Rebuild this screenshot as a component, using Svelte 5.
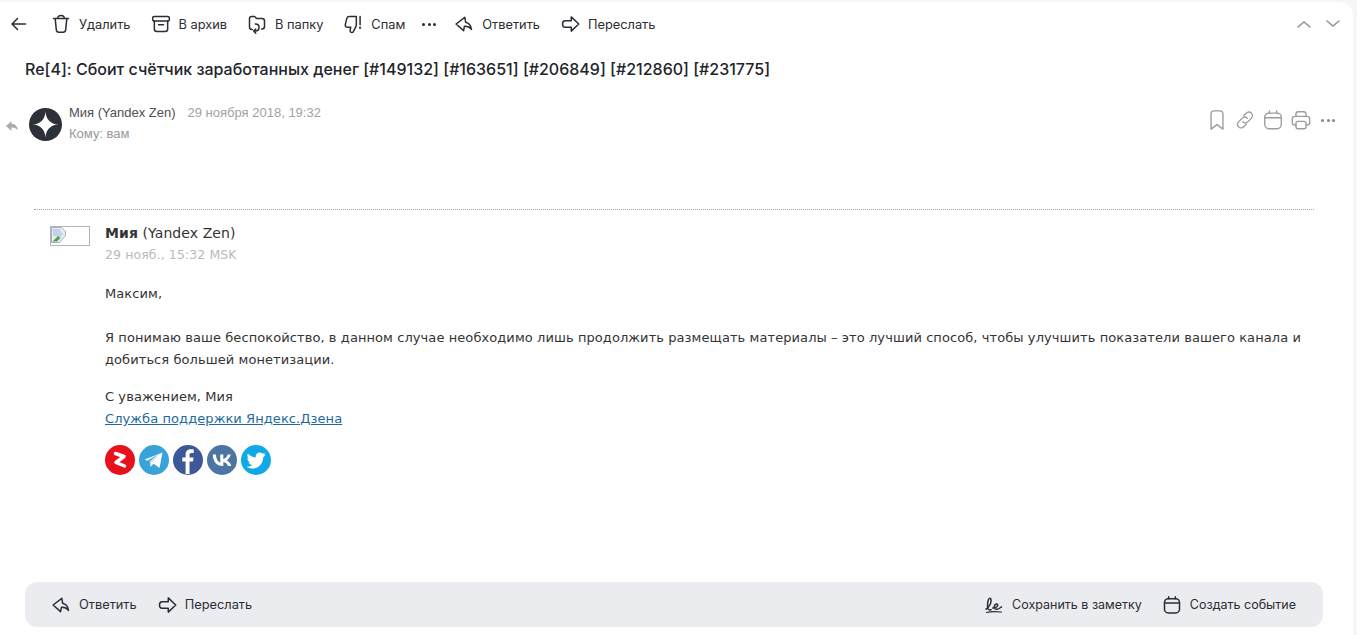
<script>
  const tools = [
    { label: 'Удалить', icon: 'trash' },
    { label: 'В архив', icon: 'archive' },
    { label: 'В папку', icon: 'folder' },
    { label: 'Спам', icon: 'spam' }
  ];
  const icons = {
    trash: '<path d="M3 5.5h18M8 5.5C8 3 9.5 1.8 12 1.8S16 3 16 5.5M5 5.5l1.4 13.500c.2 1.800 1.200 2.800 3 2.800h5.200c1.800 0 2.800-1 3-2.800L19 5.5"/>',
    archive: '<rect x="2" y="3" width="20" height="5.5" rx="1.8"/><path d="M4 8.5V18c0 2 1 3 3 3h10c2 0 3-1 3-3V8.5M9 13h6"/>',
    folder: '<path d="M6.5 18.5H6c-2 0-3-1-3-3V5.5C3 4 4 3 5.5 3H9l2.5 2.5H18c2 0 3 1.2 3 3V15c0 2-1 3-3 3h-.5"/><path d="M10 12c3 0 4.5 1.8 4.5 4s-1.5 4.500-4.500 4.500H8M10.500 18 8 20.500l2.500 2.500"/>',
    spam: '<path d="M16 3H7.5C6 3 5 3.8 4.600 5.200L2.800 12.500C2.400 14.500 3.500 16 5.500 16H9.300l-.7 3.300c-.3 1.700.7 3 2.100 3 .8 0 1.300-.4 1.700-1.100l3.600-7.200V3ZM20.500 3v10"/><circle cx="20.500" cy="16.500" r=".5"/>',
    reply: '<path d="M13 4 2.500 12l9 8 1-5.200c3.500-.2 6.500 1 8.500 3.700-.8-5-3-7.600-7-8.500L13 4Z"/>',
    forward: '<path d="M13.500 3.500 22.500 12l-9 8.500V16H6c-2 0-3-1.300-3-4s1-4 3-4h7.500V3.500Z"/>',
    calendar: '<rect x="3" y="4.500" width="18" height="17" rx="4.500"/><path d="M3 9.500h18M8 2v2.500M16 2v2.500"/>',
    note: '<path d="M2.500 17c3-2.500 6-6.500 6-10.500 0-2-1-3-2-2.500-2 1-2.800 8-1.800 12 .5 2 2 2.500 3.800 1.500M10.500 15.500c2 .5 6-1 6-3.500 0-1.800-2.200-1.800-3.500 0-1.700 2.500-.5 5.500 2.500 5.200 2-.2 3.500-1.500 5.500-3"/><path d="M3 21c5-1.200 12-1.200 18-.5" stroke-width="1.300"/>',
    bookmark: '<path d="M5.500 5.500C5.500 3.500 7 2 9 2h6c2 0 3.500 1.500 3.500 3.500V22L12 17l-6.500 5V5.500Z"/>',
    link: '<path d="M10.500 7.500 13 5c2-2 4.500-2 6-.5s1.500 4-.5 6l-3 3c-2 2-4.500 2-6 .5"/><path d="M13.500 16.500 11 19c-2 2-4.500 2-6 .5s-1.500-4 .5-6l3-3c2-2 4.500-2 6-.5"/>',
    printer: '<path d="M6.500 17.500H5c-1.500 0-2.500-1-2.500-2.500v-4c0-1.800 1.300-3 3-3h13c1.700 0 3 1.200 3 3v4c0 1.500-1 2.500-2.500 2.500h-1.500"/><path d="M6.500 8V5.500C6.500 4 7.500 3 9 3h6c1.500 0 2.500 1 2.500 2.500V8"/><rect x="6.500" y="13.500" width="11" height="8" rx="2.200"/>'
  };
</script>

{#snippet icon(name, size = 20)}
  <svg class="icon" width={size} height={size} viewBox="0 0 24 24" fill="none" stroke="currentColor" stroke-width="1.800" stroke-linecap="round" stroke-linejoin="round" aria-hidden="true">
    {@html icons[name]}
  </svg>
{/snippet}

<div class="page">
  <div class="card">
    <header class="toolbar">
      <svg class="back" width="18" height="18" viewBox="0 0 18 18" fill="none" stroke="currentColor" stroke-width="1.500" stroke-linecap="round" stroke-linejoin="round" aria-hidden="true"><path d="M15.500 9H2M7.500 3.500 2 9l5.500 5.500"/></svg>
      {#each tools as t}
        <button class="tool">{@render icon(t.icon)}<span>{t.label}</span></button>
      {/each}
      <span class="dots"><i></i><i></i><i></i></span>
      <button class="tool">{@render icon('reply')}<span>Ответить</span></button>
      <button class="tool">{@render icon('forward')}<span>Переслать</span></button>
      <div class="pager">
        <svg width="16" height="10" viewBox="0 0 16 10" fill="none" stroke="currentColor" stroke-width="1.500" stroke-linecap="round" stroke-linejoin="round" aria-hidden="true"><path d="M2 8l6-5 6 5"/></svg>
        <svg width="16" height="10" viewBox="0 0 16 10" fill="none" stroke="currentColor" stroke-width="1.500" stroke-linecap="round" stroke-linejoin="round" aria-hidden="true"><path d="M2 2l6 5 6-5"/></svg>
      </div>
    </header>

    <h1 class="subject">Re[4]: Сбоит счётчик заработанных денег [#149132] [#163651] [#206849] [#212860] [#231775]</h1>

    <section class="meta">
      <svg class="replied" width="12" height="10" viewBox="0 0 12 10" aria-hidden="true"><path fill="#a9abae" d="M0 5 5.500 0v2.800C9 3 11.500 5 12 9.500 10 7 8 6.300 5.500 6.500V10L0 5Z"/></svg>
      <div class="avatar">
        <svg width="33" height="33" viewBox="0 0 33 33" aria-hidden="true"><circle cx="16.500" cy="16.500" r="16.500" fill="#2c3038"/><path fill="#fff" d="M16.500 3.500c.5 8 5 12.500 13 13-8 .5-12.500 5-13 13-.5-8-5-12.500-13-13 8-.5 12.500-5 13-13Z"/></svg>
      </div>
      <div class="who">
        <div class="line"><span class="from">Мия (Yandex Zen)</span><span class="date">29 ноября 2018, 19:32</span></div>
        <div class="to">Кому: вам</div>
      </div>
      <div class="actions">
        {@render icon('bookmark', 22)}
        {@render icon('link', 22)}
        {@render icon('calendar', 22)}
        {@render icon('printer', 22)}
        <span class="dots small"><i></i><i></i><i></i></span>
      </div>
    </section>

    <article class="mail">
      <div class="sender">
        <div class="broken">
          <svg width="16" height="16" viewBox="0 0 16 16" aria-hidden="true"><path fill="#e6edf6" stroke="#a6adb8" d="M.5.500h10l4 4v4l-6 7h-8z"/><path fill="#c2d2e8" d="M2 2h7.500v3.500l3 1L9 10 2 9z"/><path fill="#5ba045" d="M1.500 14.500 7 9l2.500 2-3.500 3.500z"/></svg>
        </div>
        <div>
          <div class="name"><b>Мия</b> (Yandex Zen)</div>
          <div class="sent">29 нояб., 15:32 MSK</div>
        </div>
      </div>
      <div class="text">
        <p class="hello">Максим,</p>
        <p class="para">Я понимаю ваше беспокойство, в данном случае необходимо лишь продолжить размещать материалы – это лучший способ, чтобы улучшить показатели вашего канала и добиться большей монетизации.</p>
        <p class="sign">С уважением, Мия<br /><a href="#support">Служба поддержки Яндекс.Дзена</a></p>
        <div class="social">
          <svg width="30" height="30" viewBox="0 0 30 30" aria-hidden="true"><circle cx="15" cy="15" r="15" fill="#e8101a"/><path fill="none" stroke="#fff" stroke-width="3.500" stroke-linecap="round" stroke-linejoin="round" d="M10.500 8.500 19 11.500l-8 6 8.500 3.500"/></svg>
          <svg width="30" height="30" viewBox="0 0 30 30" aria-hidden="true"><circle cx="15" cy="15" r="15" fill="#37a3d8"/><path fill="#fff" d="M5.500 14.500 23.500 7.500 20.500 23l-6-4.200-3 3-.8-5.300 9-7.500-11.200 6.700z"/><path fill="#c4dff0" d="M10.700 16.500l.8 5.300 1-4 7-7.300z"/></svg>
          <svg width="30" height="30" viewBox="0 0 30 30" aria-hidden="true"><circle cx="15" cy="15" r="15" fill="#3b5998"/><path fill="#fff" d="M16.500 29V16.500h3.500l.5-4h-4V10c0-1.200.4-2 2-2h2.200V4.400C20 4.300 19 4.200 17.800 4.200c-3 0-5.200 1.800-5.200 5.300v3H9.300v4h3.300V29z"/></svg>
          <svg width="30" height="30" viewBox="0 0 30 30" aria-hidden="true"><circle cx="15" cy="15" r="15" fill="#4c75a3"/><path fill="#fff" d="M15.800 21C9.500 21 6 16.700 5.800 9.500H9c.1 5.300 2.500 7.500 4.300 8V9.500h3v4.600c1.800-.2 3.700-2.300 4.400-4.600h3c-.5 2.800-2.600 4.900-4 5.800 1.400.7 3.700 2.500 4.600 5.700h-3.300c-.7-2.200-2.500-3.900-4.700-4.100V21z"/></svg>
          <svg width="30" height="30" viewBox="0 0 30 30" aria-hidden="true"><circle cx="15" cy="15" r="15" fill="#10a9e8"/><path fill="#fff" d="M24.500 9.300c-.7.300-1.400.5-2.200.6.800-.5 1.400-1.200 1.700-2.100-.8.400-1.600.8-2.500 1-1.600-1.700-4.200-1.700-5.700 0-1 1-1.300 2.300-1 3.700-3.200-.2-6-1.700-7.900-4-1 1.800-.5 4.100 1.200 5.300-.6 0-1.200-.2-1.800-.5 0 1.900 1.300 3.500 3.100 3.900-.6.200-1.200.2-1.800.1.500 1.600 2 2.700 3.700 2.700-1.700 1.300-3.700 1.900-5.800 1.700 6 3.800 15.200 1.500 16.600-8 .1-.5.1-1 .1-1.500.8-.6 1.500-1.200 2.100-2z"/></svg>
        </div>
      </div>
    </article>

    <footer class="quick">
      <button class="tool">{@render icon('reply')}<span>Ответить</span></button>
      <button class="tool">{@render icon('forward')}<span>Переслать</span></button>
      <div class="spacer"></div>
      <button class="tool narrow">{@render icon('note')}<span>Сохранить в заметку</span></button>
      <button class="tool narrow">{@render icon('calendar')}<span>Создать событие</span></button>
    </footer>
  </div>
</div>

<style>
  :global(body) {
    margin: 0;
    background: #f5f6f8;
  }

  .page {
    height: 635px;
    overflow: hidden;
    padding: 2px 4px 0 0;
    box-sizing: border-box;
  }

  .card {
    height: 100%;
    background: #fff;
    border-radius: 0 14px 0 0;
    font-family: Inter, "Noto Sans", sans-serif;
    color: #2b2d33;
    display: flex;
    flex-direction: column;
  }

  .toolbar {
    display: flex;
    align-items: center;
    height: 44px;
    padding: 0 12px 0 10px;
    flex: none;
  }

  .back {
    margin-right: 23px;
  }

  .tool {
    display: flex;
    align-items: center;
    gap: 8px;
    border: 0;
    padding: 0;
    background: none;
    color: #2b2d33;
    font: inherit;
    font-size: 12.8px;
    margin-right: 20px;
    white-space: nowrap;
  }

  .tool.narrow {
    font-size: 12.5px;
  }

  .tool :global(.icon) {
    flex: none;
  }

  .dots {
    display: inline-flex;
    gap: 2.5px;
    margin: 0 18px 0 -3px;
  }

  .dots i {
    width: 3px;
    height: 3px;
    border-radius: 50%;
    background: #2b2d33;
  }

  .dots.small {
    margin: 0;
    padding: 0 0 0 3px;
  }

  .dots.small i {
    background: #85878c;
  }

  .pager {
    margin-left: auto;
    display: flex;
    gap: 13px;
    color: #8d8f94;
  }

  .subject {
    margin: 11px 0 0 25px;
    font-size: 16px;
    font-weight: 500;
    line-height: 24px;
    flex: none;
    color: #22242a;
  }

  .meta {
    position: relative;
    display: flex;
    align-items: flex-start;
    margin-top: 22px;
    padding: 0 18px 0 29px;
    height: 48px;
    flex: none;
  }

  .replied {
    position: absolute;
    left: 6px;
    top: 18px;
  }

  .avatar {
    width: 33px;
    height: 33px;
    margin-top: 5px;
    margin-right: 7px;
    flex: none;
  }

  .who {
    flex: 1;
    padding-top: 1px;
    font-family: "Liberation Sans", Arial, sans-serif;
    font-size: 13px;
  }

  .line {
    display: flex;
    gap: 12px;
    line-height: 18px;
  }

  .from {
    color: #4d4f54;
  }

  .date {
    color: #a0a2a6;
  }

  .to {
    color: #96989c;
    margin-top: 4px;
    line-height: 16px;
  }

  .actions {
    display: flex;
    align-items: center;
    gap: 6px;
    color: #9b9da1;
    margin-top: 6px;
  }

  .actions :global(.icon) {
    stroke-width: 1.5;
  }

  .mail {
    margin: 58px 39px 0 34px;
    border-top: 1px dotted #a5a5a5;
    font-family: "DejaVu Sans", Verdana, sans-serif;
    color: #333;
    flex: 1;
  }

  .sender {
    display: flex;
    padding: 14px 0 0 16px;
    gap: 15px;
  }

  .broken {
    width: 38px;
    height: 18px;
    border: 1px solid #b4b4b4;
    margin-top: 2px;
    overflow: hidden;
    flex: none;
  }

  .broken svg {
    display: block;
  }

  .name {
    font-size: 14px;
    line-height: 18px;
    letter-spacing: .08px;
  }

  .name b {
    font-weight: 700;
  }

  .sent {
    color: #bababa;
    font-size: 12.5px;
    line-height: 16px;
    margin-top: 5px;
    letter-spacing: .1px;
  }

  .text {
    margin-left: 71px;
    font-size: 13px;
    line-height: 22px;
    letter-spacing: .08px;
    color: #333;
  }

  .text p {
    margin: 0;
  }

  .hello {
    padding-top: 20px;
  }

  .para {
    padding-top: 22px;
  }

  .sign {
    padding-top: 15px;
  }

  .sign a {
    color: #1d6a9f;
  }

  .social {
    display: flex;
    gap: 4px;
    margin-top: 15px;
  }

  .quick {
    display: flex;
    align-items: center;
    height: 45px;
    margin: 0 30px 8px 25px;
    padding: 0 7px 0 26px;
    background: #ebecf0;
    border-radius: 12px;
    flex: none;
  }

  .spacer {
    flex: 1;
  }
</style>
